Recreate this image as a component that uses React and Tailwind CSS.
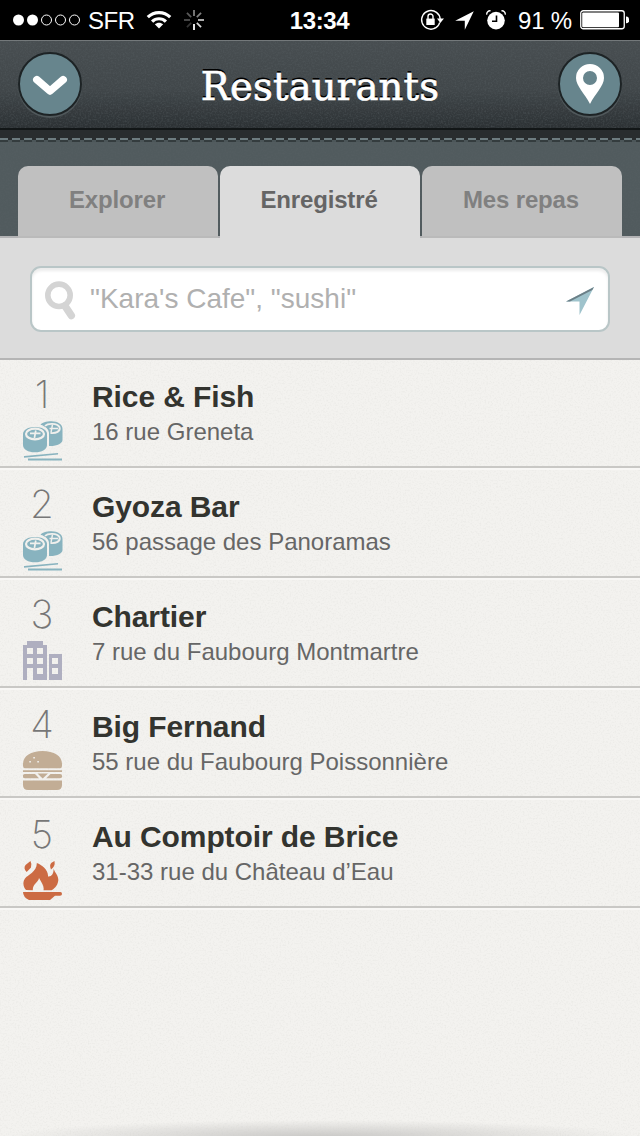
import React from "react";

const sans = "font-['Liberation_Sans',Arial,sans-serif]";

function Grain({ id, dark }) {
  return (
    <svg className="pointer-events-none absolute inset-0 h-full w-full" aria-hidden="true">
      <filter id={id} x="0" y="0" width="100%" height="100%">
        <feTurbulence type="fractalNoise" baseFrequency="0.6" numOctaves="2" seed="4" />
        <feColorMatrix
          values={
            dark
              ? "0 0 0 0 0.1  0 0 0 0 0.12  0 0 0 0 0.13  0 0.9 0 0 -0.38"
              : "0 0 0 0 0.6  0 0 0 0 0.6  0 0 0 0 0.57  0 0.5 0 0 -0.23"
          }
        />
      </filter>
      <rect width="100%" height="100%" filter={`url(#${id})`} />
    </svg>
  );
}

const rayOpacities = [0.5, 0.5, 0.75, 0.85, 1, 0.2, 0.3, 0.35];

function StatusBar() {
  return (
    <div className={`${sans} grid h-10 grid-cols-[1fr_60px_1fr] items-center bg-black text-[24px] leading-none text-white`}>
      <div className="flex items-center pl-[13px]">
        <svg width="68" height="12" viewBox="0 0 68 12" fill="none" stroke="white">
          <circle cx="5.5" cy="6" r="5.5" fill="white" stroke="none" />
          <circle cx="19.5" cy="6" r="5.5" fill="white" stroke="none" />
          <circle cx="33.5" cy="6" r="5" />
          <circle cx="47.5" cy="6" r="5" />
          <circle cx="61.5" cy="6" r="5" />
        </svg>
        <span className="ml-[7px] w-[48px] pt-[2px] tracking-[-0.5px]">SFR</span>
        <svg className="ml-[10px]" width="26" height="20" viewBox="0 0 26 20" fill="none" stroke="white" strokeWidth="3.2">
          <path d="M1.8 7.2C8 1 18 1 24.2 7.2" />
          <path d="M6.1 11.6C10 7.8 16 7.8 19.9 11.6" />
          <path d="M13 18.5L8.8 14.3C11.2 12.1 14.8 12.1 17.2 14.3Z" fill="white" stroke="none" />
        </svg>
        <svg className="ml-[11px]" width="22" height="22" viewBox="-11 -11 22 22" stroke="white" strokeWidth="1.8">
          {rayOpacities.map((opacity, i) => (
            <line key={i} y1="-4" y2="-10" opacity={opacity} transform={`rotate(${i * 45})`} />
          ))}
        </svg>
      </div>
      <span className="-ml-px whitespace-nowrap pt-[2px] text-center font-bold tracking-[-0.4px]">13:34</span>
      <div className="flex items-center justify-end pr-[11px]">
        <svg width="24" height="22" viewBox="0 0 24 22" fill="none" stroke="white" strokeWidth="1.4">
          <path d="M15 19.2A9.3 9.3 0 1 1 20.2 10" />
          <path d="M17 9.5H24L20.3 14Z" fill="white" stroke="none" />
          <path d="M19.7 13.5A9.3 9.3 0 0 1 14 19.6" />
          <rect x="6.3" y="9.6" width="8.4" height="6.4" fill="white" stroke="none" />
          <path d="M8 10V7.5a2.5 2.5 0 0 1 5 0V10" />
        </svg>
        <svg className="ml-[11px]" width="19" height="19" viewBox="0 0 19 19" fill="white">
          <path d="M18.8 0.3L9.8 18.7V9.7H0.2Z" />
        </svg>
        <svg className="ml-[12px]" width="20" height="20" viewBox="0 0 20 20" fill="none">
          <circle cx="10" cy="10.6" r="8.8" fill="white" />
          <path d="M10.5 5.5V11.3H6" stroke="black" strokeWidth="1.6" />
          <path d="M0.8 4.6A3.2 3.2 0 0 1 4.6 0.9M15.4 0.9A3.2 3.2 0 0 1 19.2 4.6" stroke="white" strokeWidth="1.4" />
        </svg>
        <span className="ml-[12px] w-[54px] whitespace-nowrap pt-[2px] tracking-[-0.2px]">91 %</span>
        <svg className="ml-[8px]" width="49" height="20" viewBox="0 0 49 20" fill="none">
          <rect x="0.75" y="0.75" width="43.5" height="18" rx="2.5" stroke="white" strokeWidth="1.3" />
          <rect x="2.2" y="2.4" width="36.8" height="14.8" rx="1" fill="white" />
          <path d="M46 6.5h0.5a2.5 3.2 0 0 1 0 6.8H46Z" fill="white" />
        </svg>
      </div>
    </div>
  );
}

function RoundButton({ children, label }) {
  return (
    <button
      aria-label={label}
      className="flex h-16 w-16 items-center justify-center rounded-full border-2 border-[#1d2325] bg-[#67858d] shadow-[0_2px_0_#50585b]"
    >
      {children}
    </button>
  );
}

function Header() {
  return (
    <header className="relative h-[90px] border-t border-b-2 border-t-[#74797b] border-b-[#121617] bg-linear-to-b from-[#484e51] via-[#41474a] via-55% to-[#2c3134]">
      <Grain id="grain-header" dark />
      <div className="relative flex h-full items-start justify-between px-[18px] pt-[11px]">
        <RoundButton label="Menu">
          <svg width="36" height="24" viewBox="0 0 36 24" fill="none" stroke="white" strokeWidth="7.5" strokeLinecap="round" strokeLinejoin="round">
            <path d="M4.8 7.6L18 19L31.2 7.6" />
          </svg>
        </RoundButton>
        <h1 className="mt-[11px] w-[240px] whitespace-nowrap text-center font-['DejaVu_Serif',serif] text-[38.5px] leading-[48px] tracking-[0.2px] text-white [-webkit-text-stroke:0.7px_white] [text-shadow:0_-2px_0_#000]">
          Restaurants
        </h1>
        <RoundButton label="Carte">
          <svg width="28" height="40" viewBox="0 0 28 40">
            <path
              fillRule="evenodd"
              fill="white"
              d="M14 0A14 14 0 0 0 0 14C0 22 9 30 14 40C19 30 28 22 28 14A14 14 0 0 0 14 0ZM14 7a7 7 0 1 1 0 14a7 7 0 0 1 0-14Z"
            />
          </svg>
        </RoundButton>
      </div>
    </header>
  );
}

function Tab({ children, active }) {
  return (
    <div
      className={`h-full w-[200px] rounded-t-[10px] pt-[20px] text-center text-[24px] leading-[28px] font-bold tracking-[-0.15px] ${
        active ? "bg-[#dcdcdc] text-[#656565]" : "border-b-2 border-[#bababa] bg-[#c0c0c0] text-[#808080]"
      }`}
    >
      <span className="-ml-0.5">{children}</span>
    </div>
  );
}

function Tabs() {
  return (
    <nav className={`${sans} relative flex h-[108px] flex-col bg-[#515b5e]`}>
      <Grain id="grain-tabs" dark />
      <div className="relative h-2 bg-[#292d2e]" />
      <div className="relative h-0.5 bg-[repeating-linear-gradient(90deg,#6d7c7f_0_8px,#292d2e_8px_12px)]" />
      <div className="relative h-0.5 bg-[repeating-linear-gradient(90deg,#343c3e_0_8px,#4c5659_8px_12px)]" />
      <div className="relative mt-6 flex h-[72px] justify-center gap-0.5 bg-[linear-gradient(#b3b3b5,#b3b3b5)] bg-[length:100%_2px] bg-bottom bg-no-repeat">
        <Tab>Explorer</Tab>
        <Tab active>Enregistré</Tab>
        <Tab>Mes repas</Tab>
      </div>
    </nav>
  );
}

function Search() {
  return (
    <div className={`${sans} h-[122px] border-b-2 border-[#b5b5b5] bg-[#dcdcdc] px-[30px] pt-7`}>
      <div className="flex h-[66px] items-center rounded-[11px] border-2 border-[#b9c6c7] bg-white px-[13px] shadow-[inset_0_3px_3px_#ececec]">
        <svg className="mt-[3px]" width="31" height="39" viewBox="0 0 31 39" fill="none" stroke="#d4d4d4">
          <circle cx="14" cy="14.3" r="11.2" strokeWidth="5.6" />
          <path d="M20 25L26.3 34.5" strokeWidth="7.5" strokeLinecap="round" />
        </svg>
        <span className="ml-[14px] flex-1 text-[28px] tracking-[0px] text-[#b0b0b0]">"Kara's Cafe", "sushi"</span>
        <svg className="mt-1" width="29" height="28" viewBox="0 0 29 28">
          <path d="M28 0L13.5 28V14.5H0Z" fill="#9fc3cc" />
          <path d="M28 0L0 14.5H4L26.3 3Z" fill="#6b7f87" />
        </svg>
      </div>
    </div>
  );
}

function SushiIcon() {
  return (
    <svg width="40" height="40" viewBox="0 0 40 40" fill="#88b3bf">
      <path d="M17.5 3.8C19 1.5 23 0.3 28.5 0.3C35 0.3 39.5 3.5 39.5 8V19C39.5 22.5 34 25.3 26 25V12C26 8.5 22.5 5.2 17.5 3.8Z" />
      <path d="M22 4.8C25 2 34 2 36.5 6C38 10.5 33 12.5 27.5 12" stroke="#f1f0ed" strokeWidth="1.8" fill="none" />
      <path d="M29.5 3.5L28 11.5M26.5 7.5H35" stroke="#f1f0ed" strokeWidth="1.4" />
      <path d="M0 13C0 8.8 5 6 12 6C19 6 24 8.8 24 13V24C24 28.5 19 31.3 12 31.3C5 31.3 0 28.5 0 24Z" />
      <ellipse cx="12" cy="13" rx="9" ry="5.3" fill="none" stroke="#f1f0ed" strokeWidth="2.2" />
      <path d="M12.8 9.5L11.4 17M7 12.4H17.5" stroke="#f1f0ed" strokeWidth="1.7" />
      <path d="M1 35.1L35 31.9V33.6L1 36.8ZM5 37.6H39V39.4H5Z" />
    </svg>
  );
}

function CityIcon() {
  return (
    <svg width="40" height="40" viewBox="0 0 40 40" fill="#afafc0" shapeRendering="crispEdges">
      <path
        fillRule="evenodd"
        d="M4 0H20V4H24V39H10V27H4V39H0V4H4ZM4 7V13H10V7ZM14 7V13H20V7ZM4 17V23H10V17ZM14 17V23H20V17ZM14 27V33H20V27ZM26 13H39V39H26ZM29 17V23H35V17ZM29 27V33H35V27Z"
      />
    </svg>
  );
}

function BurgerIcon() {
  return (
    <svg width="40" height="40" viewBox="0 0 40 40" fill="#c2ad95">
      <path d="M0 13C0 5 8 0 19.5 0S39 5 39 13V15Q39 17.3 37 17.3H2Q0 17.3 0 15Z" />
      <path d="M0 19.2H39V21H0ZM2 23H12L16 27.3H2A2.15 2.15 0 0 1 2 23ZM14.5 22.6H25L19.7 27.6ZM27.5 23H37A2.15 2.15 0 0 1 37 27.3H23.3ZM0 29.4H39V34Q39 39 34 39H5Q0 39 0 34Z" />
      <path d="M10.3 6h1.6v1.6h-1.6ZM6.3 10h1.6v1.6h-1.6ZM14.3 10h1.6v1.6h-1.6Z" fill="#f1f0ed" />
    </svg>
  );
}

function FlameIcon() {
  return (
    <svg width="40" height="40" viewBox="0 0 40 40" fill="#cc6b43">
      <path d="M3 29C0 26 -0.5 21 2 17.5C5 13.5 14 11 13.8 2C19 4 25.5 9 25 15.5C29 16 31 12 30.5 7.5C32 12 36 15 35.2 20C34.5 25 31 28 28.5 29.2H20.5C21.5 24.5 18 21 16 17C15.5 21 9.5 23 9.8 29.2Z" />
      <path d="M7.5 0Q9 3 8 6.5L3.7 11Q0 7.5 2.5 4ZM31.5 0Q32.5 5.5 28 8.5Q26 4 28.5 1.8Z" />
      <path d="M0 31H37.5Q39 31 39 33Q39 34.8 37 34.8H32L27 39H6Q0 36 0 31Z" />
    </svg>
  );
}

const places = [
  { name: "Rice & Fish", address: "16 rue Greneta", Icon: SushiIcon },
  { name: "Gyoza Bar", address: "56 passage des Panoramas", Icon: SushiIcon },
  { name: "Chartier", address: "7 rue du Faubourg Montmartre", Icon: CityIcon },
  { name: "Big Fernand", address: "55 rue du Faubourg Poissonnière", Icon: BurgerIcon },
  { name: "Au Comptoir de Brice", address: "31-33 rue du Château d’Eau", Icon: FlameIcon },
];

export default function App() {
  return (
    <div className="flex h-[1136px] w-[640px] flex-col overflow-hidden bg-[#f3f2ef]">
      <StatusBar />
      <Header />
      <Tabs />
      <Search />
      <main className={`${sans} relative flex-1 overflow-hidden`}>
        <Grain id="grain-list" />
        <ol className="relative -mt-0.5">
          {places.map(({ name, address, Icon }) => (
            <li key={name} className="flex h-[110px] border-b-2 border-[#c9c8c5] shadow-[0_2px_0_#f8f7f5]">
              <div className="flex w-[84px] flex-col items-center pt-[15px]">
                <span className="block h-[48px] font-['Inter','Roboto',sans-serif] text-[38.5px] leading-[42px] font-extralight text-[#777]">
                  {places.findIndex((place) => place.name === name) + 1}
                </span>
                <div className="-mr-px pl-px">
                  <Icon />
                </div>
              </div>
              <div className="pt-[21px] pl-2">
                <h2 className="text-[30px] leading-[36px] font-bold tracking-[-0.1px] text-[#33342f]">{name}</h2>
                <p className="mt-0.5 text-[24px] leading-[30px] tracking-[0px] text-[#666]">{address}</p>
              </div>
            </li>
          ))}
        </ol>
        <div className="absolute inset-x-0 -bottom-[18px] h-[34px] bg-[radial-gradient(closest-side,#c9c8c6,transparent)]" />
      </main>
    </div>
  );
}
